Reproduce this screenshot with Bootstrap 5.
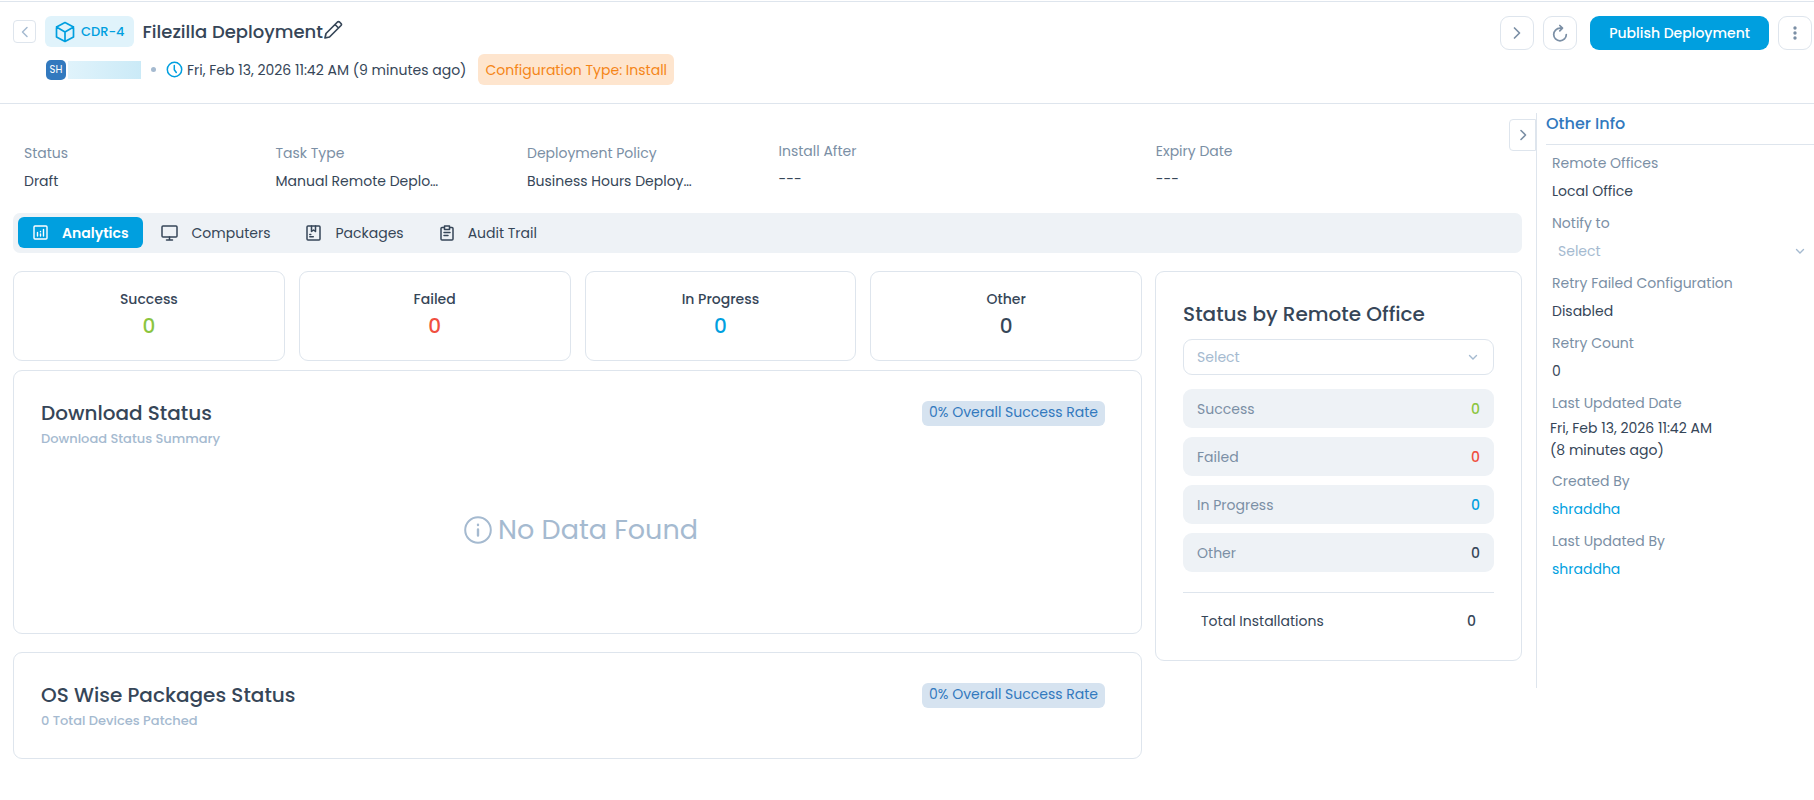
<!DOCTYPE html>
<html lang="en">
<head>
<meta charset="utf-8">
<meta name="viewport" content="width=device-width, initial-scale=1">
<title>Filezilla Deployment</title>
<link href="https://cdn.jsdelivr.net/npm/bootstrap@5.3.0/dist/css/bootstrap.min.css" rel="stylesheet">
<style>
  :root { --ink:#364658; --soft:#7b8fa5; --pale:#a5bad0; --line:#dee5ed; --panel:#eef2f6; --brand:#009fdf; --royal:#3279be; }
  body { font-family: Poppins, Inter, "Noto Sans", sans-serif; font-size:14px; line-height:20px; color:var(--ink); background:#fff; }
  svg { flex:none; fill:none; stroke:currentColor; stroke-linecap:round; stroke-linejoin:round; }
  a { color:var(--brand); text-decoration:none; }
  .t-20 { font-size:20px; line-height:30px; font-weight:500; }
  .c-soft { color:var(--soft); }
  .c-pale { color:var(--pale); }
  .c-green { color:#8bc53f; }
  .c-red { color:#f04e3e; }
  .c-brand { color:var(--brand); }
  .btn { --bs-btn-color:var(--soft); }

  .page-head { margin-top:1px; border-top:1px solid var(--line); border-bottom:1px solid var(--line); padding:14px 2px 18px 13px; }
  .id-row { height:31px; }
  .meta-row { height:31px; margin-top:7px; padding-left:33px; }
  .back-btn { width:23px; height:23px; border-radius:4px; border-color:var(--line); color:var(--pale); margin-right:9px; }
  .id-chip { height:31px; border-radius:6px; background:#e0f3fb; color:var(--brand); font-size:13px; font-weight:500; padding:0 9px 0 10px; gap:6px; margin-right:9px; }
  .page-title { font-size:18px; line-height:24px; font-weight:500; margin:0; }
  .edit-btn { --bs-btn-color:var(--ink); }
  .avatar { width:20px; height:20px; border-radius:5px; background:var(--royal); color:#fff; font-size:10px; }
  .masked { width:73px; height:18px; margin:0 10px 0 2px; background:linear-gradient(90deg,#e0f3fb,#cbeaf7); }
  .sep-dot { width:5px; height:5px; border-radius:50%; background:var(--pale); margin-right:10px; }
  .type-chip { height:31px; border-radius:6px; background:#fee5ce; color:#f58518; padding:0 7px; margin-left:12px; }
  .tool-set { gap:9px; }
  .tool-btn { width:34px; height:34px; border-radius:9px; border-color:var(--line); }
  .publish-btn { --bs-btn-color:#fff; --bs-btn-bg:var(--brand); --bs-btn-hover-bg:#008cc5; --bs-btn-hover-color:#fff; height:34px; border-radius:9px; font-size:14px; font-weight:500; line-height:20px; padding:0 19px; margin-left:4px; border:0; }

  .main-col { padding:0 14px 0 13px; min-width:0; }
  .facts { padding-top:39px; padding-bottom:22px; }
  .facts > div { padding:0 11px; }
  .facts dt, .info-list dt { font-weight:400; color:var(--soft); margin-bottom:8px; }
  .facts dd, .info-list dd { margin:0; }
  .facts .date-fact { margin-top:-2px; }

  .tab-bar { background:var(--panel); border-radius:7px; height:40px; padding:4px 5px; }
  .tab-bar .nav-link { display:flex; align-items:center; height:31px; gap:14px; padding:0 13px; font-size:14px; color:var(--ink); border-radius:6px; margin-right:10px; }
  .tab-bar .nav-link.active { background:var(--brand); color:#fff; font-weight:600; padding:0 14px 0 15px; margin-right:5px; }

  .board { display:grid; grid-template-columns:minmax(0,40fr) minmax(0,13fr); gap:13px; margin-top:18px; align-items:start; }
  .counts { display:grid; grid-template-columns:repeat(4,minmax(0,1fr)); gap:14px; margin-bottom:9px; }
  .tile { border:1px solid var(--line); border-radius:9px; background:#fff; }
  .count-tile { text-align:center; padding:16px 8px 18px; font-weight:500; line-height:22px; }
  .count-tile strong { display:block; font-size:20px; line-height:32px; font-weight:500; }
  .report-tile { padding:27px 36px 26px 27px; }
  .report-tile + .report-tile { margin-top:18px; }
  .rate-chip { background:#d6e3f0; color:var(--royal); border-radius:6px; height:25px; line-height:23px; padding:0 7px; margin-top:3px; }
  .sub-line { font-size:13px; line-height:22px; font-weight:500; color:var(--pale); }
  .no-data { font-size:27px; line-height:36px; color:var(--pale); padding:62px 0 59px 16px; gap:6px; }

  .office-tile { padding:27px; }
  .form-select { color:var(--pale); background-image:url("data:image/svg+xml,%3Csvg xmlns='http://www.w3.org/2000/svg' viewBox='0 0 10 10' fill='none' stroke='%23a5bad0' stroke-width='1.4' stroke-linecap='round'%3E%3Cpath d='M1.5 3.5 5 7l3.500-3.500'/%3E%3C/svg%3E"); background-size:10px; font-size:14px; line-height:20px; }
  .office-select { height:36px; border-color:var(--line); border-radius:9px; padding:0 30px 0 13px; margin:10px 0 14px; background-position:right 15px center; }
  .office-row { height:39px; border-radius:9px; background:var(--panel); padding:0 14px; margin-bottom:9px; }
  .office-total { border-top:1px solid var(--line); margin-top:20px; padding:17px 18px 1px; line-height:22px; }

  .side-col { width:278px; margin-top:9px; min-height:calc(100vh - 225px); border-left:1px solid var(--line); padding-left:9px; position:relative; align-self:flex-start; }
  .side-toggle { position:absolute; left:-28px; top:6px; width:27px; height:32px; border-color:var(--line); border-radius:4px 0 0 4px; }
  .side-title { font-size:16px; line-height:22px; font-weight:500; color:var(--royal); border-bottom:1px solid var(--line); padding-bottom:9px; margin:0; }
  .info-list { padding:8px 0 0 6px; margin:0; }
  .info-list dd { margin-bottom:12px; }
  .info-list .stamp { line-height:22px; margin:-4px 100px 10px -2px; }
  .notify-select { height:20px; border:0; padding:0 24px 0 6px; background-color:transparent; background-position:right 9px center; }
</style>
</head>
<body>
<header class="page-head d-flex justify-content-between align-items-start">
  <div>
    <div class="id-row d-flex align-items-center">
      <button type="button" class="btn back-btn p-0 d-flex align-items-center justify-content-center" aria-label="Back">
        <svg width="10" height="12" viewBox="0 0 10 12" stroke-width="1.500"><path d="M7 1.500 2.500 6 7 10.500"/></svg>
      </button>
      <span class="id-chip d-flex align-items-center">
        <svg width="20" height="22" viewBox="0 0 20 22" stroke-width="1.700"><path d="M10 1.500 18.500 6v10L10 20.500 1.500 16V6zM1.500 6 10 11l8.500-5M10 11v9.500"/></svg>
        CDR-4
      </span>
      <h1 class="page-title">Filezilla Deployment</h1>
      <button type="button" class="btn edit-btn p-0 border-0 d-flex mb-1" aria-label="Edit name">
        <svg width="20" height="20" viewBox="0 0 20 20" stroke-width="1.700"><path d="M2 18l1-4.500L14.500 2a1.500 1.500 0 0 1 2 0L18 3.500a1.500 1.500 0 0 1 0 2L6.500 17zM12 4.500 15.500 8"/></svg>
      </button>
    </div>
    <div class="meta-row d-flex align-items-center">
      <span class="avatar d-flex align-items-center justify-content-center">SH</span>
      <span class="masked"></span>
      <span class="sep-dot"></span>
      <svg class="c-brand me-1" width="17" height="17" viewBox="0 0 17 17" stroke-width="1.500"><circle cx="8.500" cy="8.500" r="7.200"/><path d="M8.300 4.500v4.200l2 2.800"/></svg>
      <span>Fri, Feb 13, 2026 11:42 AM (9 minutes ago)</span>
      <span class="type-chip d-flex align-items-center">Configuration Type: Install</span>
    </div>
  </div>
  <div class="tool-set d-flex align-items-center">
    <button type="button" class="btn tool-btn p-0 d-flex align-items-center justify-content-center" aria-label="Next">
      <svg width="10" height="14" viewBox="0 0 10 14" stroke-width="1.700"><path d="M2.500 2 7.500 7l-5 5"/></svg>
    </button>
    <button type="button" class="btn tool-btn p-0 d-flex align-items-center justify-content-center" aria-label="Refresh">
      <svg width="18" height="18" viewBox="0 0 18 18" stroke-width="1.700"><path d="M11.200 4.200H9A6.300 6.300 0 1 0 15.300 10.500M8.800 1.500l2.700 2.700-2.700 2.600"/></svg>
    </button>
    <button type="button" class="btn publish-btn">Publish Deployment</button>
    <button type="button" class="btn tool-btn p-0 d-flex align-items-center justify-content-center" aria-label="More actions">
      <svg width="4" height="14" viewBox="0 0 4 14"><path d="M2 2v.01M2 7v.01M2 12v.01" stroke-width="3.400"/></svg>
    </button>
  </div>
</header>

<div class="d-flex">
  <main class="main-col flex-grow-1">
    <dl class="facts row g-0 m-0">
      <div class="col-2"><dt>Status</dt><dd>Draft</dd></div>
      <div class="col-2"><dt>Task Type</dt><dd>Manual Remote Deplo…</dd></div>
      <div class="col-2"><dt>Deployment Policy</dt><dd>Business Hours Deploy…</dd></div>
      <div class="col-3 date-fact"><dt>Install After</dt><dd>---</dd></div>
      <div class="col-3 date-fact"><dt>Expiry Date</dt><dd>---</dd></div>
    </dl>

    <nav class="tab-bar nav flex-nowrap" aria-label="Deployment sections">
      <a class="nav-link active" href="#analytics" aria-current="page">
        <svg width="15" height="15" viewBox="0 0 15 15" stroke-width="1.400"><rect x="1" y="1" width="13" height="13" rx="1"/><path d="M4.500 7.500v3.500M7.500 9v2M7.500 6.500v.2M10.500 4.500V11"/></svg>
        Analytics</a>
      <a class="nav-link" href="#computers">
        <svg width="17" height="16" viewBox="0 0 17 16" stroke-width="1.500"><rect x="1" y="1" width="15" height="11" rx="1"/><path d="M8.500 12v3M5.500 15h6"/></svg>
        Computers</a>
      <a class="nav-link" href="#packages">
        <svg width="15" height="16" viewBox="0 0 15 16" stroke-width="1.500"><rect x="1" y="1" width="13" height="14" rx="1"/><path d="M5.500 1v5.500l2-1.500 2 1.500V1M3.800 11.800h3.500M3.800 9.500h1"/></svg>
        Packages</a>
      <a class="nav-link" href="#audit">
        <svg width="14" height="16" viewBox="0 0 14 16" stroke-width="1.500"><path d="M4 2.500H2a1 1 0 0 0-1 1V14a1 1 0 0 0 1 1h10a1 1 0 0 0 1-1V3.500a1 1 0 0 0-1-1h-2M4.500 1h5v3.500h-5zM4 7.500h6M4 10.500h4"/></svg>
        Audit Trail</a>
    </nav>

    <div class="board">
      <div>
        <div class="counts">
          <section class="tile count-tile">Success<strong class="c-green">0</strong></section>
          <section class="tile count-tile">Failed<strong class="c-red">0</strong></section>
          <section class="tile count-tile">In Progress<strong class="c-brand">0</strong></section>
          <section class="tile count-tile">Other<strong>0</strong></section>
        </div>
        <section class="tile report-tile">
          <div class="d-flex justify-content-between align-items-start">
            <div>
              <h2 class="t-20 m-0">Download Status</h2>
              <div class="sub-line">Download Status Summary</div>
            </div>
            <span class="rate-chip">0% Overall Success Rate</span>
          </div>
          <div class="no-data d-flex align-items-center justify-content-center">
            <svg width="28" height="28" viewBox="0 0 28 28" stroke-width="2"><circle cx="14" cy="14" r="12.800"/><path d="M14 13.500v6M14 8.800v.2" stroke-width="2.400"/></svg>
            No Data Found
          </div>
        </section>
        <section class="tile report-tile">
          <div class="d-flex justify-content-between align-items-start">
            <div>
              <h2 class="t-20 m-0">OS Wise Packages Status</h2>
              <div class="sub-line">0 Total Devices Patched</div>
            </div>
            <span class="rate-chip">0% Overall Success Rate</span>
          </div>
        </section>
      </div>

      <section class="tile office-tile">
        <h2 class="t-20 m-0">Status by Remote Office</h2>
        <select class="form-select office-select" aria-label="Remote office"><option>Select</option></select>
        <div class="office-row d-flex align-items-center justify-content-between"><span class="c-soft">Success</span><span class="c-green fw-medium">0</span></div>
        <div class="office-row d-flex align-items-center justify-content-between"><span class="c-soft">Failed</span><span class="c-red fw-medium">0</span></div>
        <div class="office-row d-flex align-items-center justify-content-between"><span class="c-soft">In Progress</span><span class="c-brand fw-medium">0</span></div>
        <div class="office-row d-flex align-items-center justify-content-between"><span class="c-soft">Other</span><span class="fw-medium">0</span></div>
        <div class="office-total d-flex justify-content-between"><span>Total Installations</span><span class="fw-medium">0</span></div>
      </section>
    </div>
  </main>

  <aside class="side-col flex-shrink-0">
    <button type="button" class="btn side-toggle p-0 d-flex align-items-center justify-content-center" aria-label="Collapse panel">
      <svg width="8" height="12" viewBox="0 0 8 12" stroke-width="1.600"><path d="M2 1.500 6.500 6 2 10.500"/></svg>
    </button>
    <h2 class="side-title">Other Info</h2>
    <dl class="info-list">
      <dt>Remote Offices</dt><dd>Local Office</dd>
      <dt><label for="notify">Notify to</label></dt><dd><select id="notify" class="form-select notify-select"><option>Select</option></select></dd>
      <dt>Retry Failed Configuration</dt><dd>Disabled</dd>
      <dt>Retry Count</dt><dd>0</dd>
      <dt>Last Updated Date</dt><dd class="stamp">Fri, Feb 13, 2026 11:42 AM (8 minutes ago)</dd>
      <dt>Created By</dt><dd><a href="#user">shraddha</a></dd>
      <dt>Last Updated By</dt><dd><a href="#user">shraddha</a></dd>
    </dl>
  </aside>
</div>
<script src="https://cdn.jsdelivr.net/npm/bootstrap@5.3.0/dist/js/bootstrap.bundle.min.js"></script>
</body>
</html>
